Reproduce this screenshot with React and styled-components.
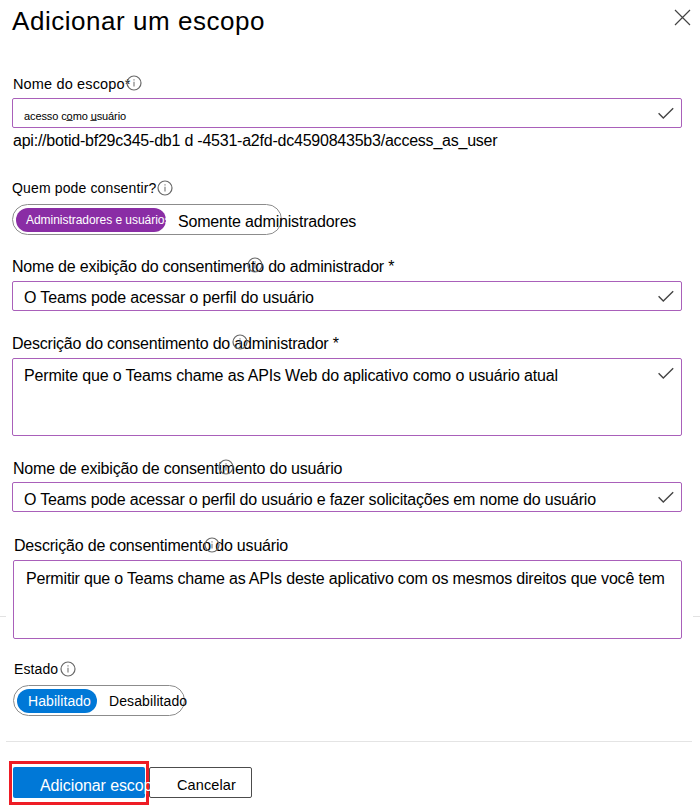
import React from "react";
import styled, { createGlobalStyle } from "styled-components";

const GlobalStyle = createGlobalStyle`
  *, *::before, *::after { box-sizing: border-box; }
  body { margin: 0; background: #fff; color: #000; font-family: "Liberation Sans", Arial, sans-serif; }
`;

const Panel = styled.main`
  display: flow-root;
  width: 700px;
  height: 809px;
  overflow: hidden;
`;

const Header = styled.header`
  display: flex;
  justify-content: space-between;
  align-items: flex-start;
  height: 74px;
  padding: 5px 9px 0 12px;
`;

const Title = styled.h1`
  margin: 0;
  font-size: 26px;
  font-weight: 400;
  line-height: 32px;
  letter-spacing: ${(p) => p.$spacing}px;
`;

const CloseButton = styled.button`
  display: flex;
  width: 17px;
  height: 17px;
  margin-top: 4px;
  padding: 0;
  border: 0;
  background: none;
`;

const Field = styled.section`
  position: relative;
  height: ${(p) => p.$height}px;
  padding-left: ${(p) => p.$indent || 12}px;
`;

const Label = styled.div`
  height: ${(p) => p.$height || 24}px;
  padding-left: ${(p) => p.$inset || 0}px;
  font-size: ${(p) => p.$size || 16}px;
  line-height: ${(p) => p.$line || 20}px;
  letter-spacing: ${(p) => p.$spacing || 0}px;
  white-space: pre;
`;

const Info = styled.svg`
  position: absolute;
  top: ${(p) => p.$top}px;
  left: ${(p) => p.$left}px;
  width: 16px;
  height: 16px;
`;

const InputBox = styled.div`
  display: flex;
  justify-content: space-between;
  align-items: flex-start;
  width: ${(p) => p.$width || 670}px;
  height: ${(p) => p.$height || 30}px;
  padding: 0 6px 0 ${(p) => p.$pad || 11}px;
  border: 1px solid #a960ba;
  border-radius: 2px;
  background: #fff;
`;

const Value = styled.span`
  margin-top: ${(p) => p.$top}px;
  font-size: ${(p) => p.$size || 16}px;
  line-height: 20px;
  letter-spacing: ${(p) => p.$spacing || 0}px;
  white-space: pre;
`;

const Check = styled.svg`
  width: 18px;
  height: 14px;
  margin-top: 8px;
`;

const Uri = styled.div`
  margin: 3px 0 0 1px;
  font-size: 16px;
  line-height: 20px;
  letter-spacing: ${(p) => p.$spacing}px;
  white-space: pre;
`;

const Toggle = styled.div`
  display: flex;
  align-items: center;
  width: ${(p) => p.$width}px;
  height: 31px;
  padding-left: 3px;
  border: 1px solid #8c8c8c;
  border-radius: 16px;
`;

const Selected = styled.span`
  flex: none;
  width: ${(p) => p.$width}px;
  height: 24px;
  padding-left: ${(p) => p.$pad}px;
  overflow: hidden;
  border-radius: 12px;
  background: ${(p) => p.$color};
  color: #fff;
  font-size: ${(p) => p.$size}px;
  line-height: ${(p) => p.$line}px;
  letter-spacing: ${(p) => p.$spacing}px;
  white-space: nowrap;
`;

const Option = styled.span`
  margin-left: 12px;
  padding-top: ${(p) => p.$top || 0}px;
  font-size: ${(p) => p.$size}px;
  line-height: 20px;
  letter-spacing: ${(p) => p.$spacing}px;
  white-space: nowrap;
`;

const SideRule = styled.div`
  position: absolute;
  top: 80px;
  left: ${(p) => p.$left}px;
  width: 7px;
  height: 1px;
  background: #e2e2e2;
`;

const Footer = styled.footer`
  display: flex;
  align-items: flex-start;
  margin: 0 8px 0 6px;
  padding: 19px 0 0 3px;
  border-top: 1px solid #e4e4e4;
`;

const Highlight = styled.div`
  position: relative;
  z-index: 1;
  width: 140px;
  height: 44px;
  padding: 3px 1px;
  border: 3px solid #ee1c25;
`;

const Primary = styled.button`
  display: block;
  width: 132px;
  height: 31px;
  padding: 0;
  border: 0;
  border-radius: 2px;
  background: #0078d7;
`;

const PrimaryText = styled.span`
  position: absolute;
  top: 12px;
  left: 28px;
  width: 111px;
  overflow: hidden;
  color: #fff;
  font: 16px/20px "Liberation Sans", Arial, sans-serif;
  letter-spacing: ${(p) => p.$spacing}px;
  text-align: left;
  white-space: nowrap;
`;

const Cancel = styled.button`
  width: 103px;
  height: 31px;
  margin-top: 6px;
  padding: 4px 0 0 27px;
  border: 1px solid #4c4c4c;
  border-radius: 2px;
  background: #fff;
  color: #000;
  font: 14.5px/20px "Liberation Sans", Arial, sans-serif;
  letter-spacing: ${(p) => p.$spacing}px;
  text-align: left;
`;

const InfoIcon = ({ left, top = 2 }) => (
  <Info $left={left} $top={top} viewBox="0 0 16 16" fill="none" stroke="#686868">
    <circle cx="8" cy="8" r="7" strokeWidth="1.2" />
    <path d="M8 6.8v4.6M8 4.2v1.4" stroke="#808080" strokeWidth="1.2" />
  </Info>
);

const CheckIcon = () => (
  <Check viewBox="0 0 18 14" fill="none" stroke="#444" strokeWidth="1.4">
    <path d="M1.6 6.2 6.3 10.9 16.2 1.3" />
  </Check>
);

export default function App() {
  return (
    <>
      <GlobalStyle />
      <Panel>
        <Header>
          <Title $spacing={0.54}>Adicionar um escopo</Title>
          <CloseButton aria-label="Fechar">
            <svg width="17" height="17" viewBox="0 0 17 17" stroke="#444" strokeWidth="1.2">
              <path d="M1 1 16 16M16 1 1 16" />
            </svg>
          </CloseButton>
        </Header>

        <Field $height={104}>
          <Label $size={14.5} $inset={1} $spacing={0.15}>Nome do escopo*</Label>
          <InfoIcon left={126} top={1} />
          <InputBox>
            <Value $size={11} $top={7} $spacing={-0.1}>acesso co̲mo u̲suário</Value>
            <CheckIcon />
          </InputBox>
          <Uri $spacing={-0.225}>api://botid-bf29c345-db1 d -4531-a2fd-dc45908435b3/access_as_user</Uri>
        </Field>

        <Field $height={79}>
          <Label $size={14} $height={26} $spacing={0.14}>Quem pode consentir?</Label>
          <InfoIcon left={157} />
          <Toggle $width={270}>
            <Selected $width={150} $pad={10} $color="#8a2da5" $size={12} $line={25} $spacing={-0.04}>Administradores e usuários</Selected>
            <Option $size={16} $top={4} $spacing={-0.18}>Somente administradores</Option>
          </Toggle>
        </Field>

        <Field $height={77}>
          <Label $spacing={-0.21}>Nome de exibição do consentimento do administrador *</Label>
          <InfoIcon left={247} top={0} />
          <InputBox>
            <Value $top={6} $spacing={-0.15}>O Teams pode acessar o perfil do usuário</Value>
            <CheckIcon />
          </InputBox>
        </Field>

        <Field $height={124}>
          <Label $spacing={-0.21}>Descrição do consentimento do administrador *</Label>
          <InfoIcon left={232} top={0} />
          <InputBox $height={78}>
            <Value $top={7} $spacing={-0.16}>Permite que o Teams chame as APIs Web do aplicativo como o usuário atual</Value>
            <CheckIcon />
          </InputBox>
        </Field>

        <Field $height={78}>
          <Label $inset={1} $line={21} $spacing={-0.2}>Nome de exibição de consentimento do usuário</Label>
          <InfoIcon left={218} top={1} />
          <InputBox>
            <Value $top={7} $spacing={-0.185}>O Teams pode acessar o perfil do usuário e fazer solicitações em nome do usuário</Value>
            <CheckIcon />
          </InputBox>
        </Field>

        <Field $height={124} $indent={13}>
          <Label $inset={1} $spacing={-0.19}>Descrição de consentimento do usuário</Label>
          <InfoIcon left={204} top={1} />
          <InputBox $height={79} $width={669} $pad={12}>
            <Value $top={8} $spacing={-0.18}>Permitir que o Teams chame as APIs deste aplicativo com os mesmos direitos que você tem</Value>
          </InputBox>
          <SideRule $left={-1} />
          <SideRule $left={693} />
        </Field>

        <Field $height={81} $indent={13}>
          <Label $size={14} $height={25} $line={18} $inset={1} $spacing={0.1}>Estado</Label>
          <InfoIcon left={60} top={1} />
          <Toggle $width={172}>
            <Selected $width={80} $pad={11} $color="#0078d7" $size={14} $line={25} $spacing={0.07}>Habilitado</Selected>
            <Option $size={14} $top={1} $spacing={0.1}>Desabilitado</Option>
          </Toggle>
        </Field>

        <Footer>
          <Highlight>
            <Primary>
              <PrimaryText $spacing={-0.1}>Adicionar escopo</PrimaryText>
            </Primary>
          </Highlight>
          <Cancel $spacing={0.1}>Cancelar</Cancel>
        </Footer>
      </Panel>
    </>
  );
}
